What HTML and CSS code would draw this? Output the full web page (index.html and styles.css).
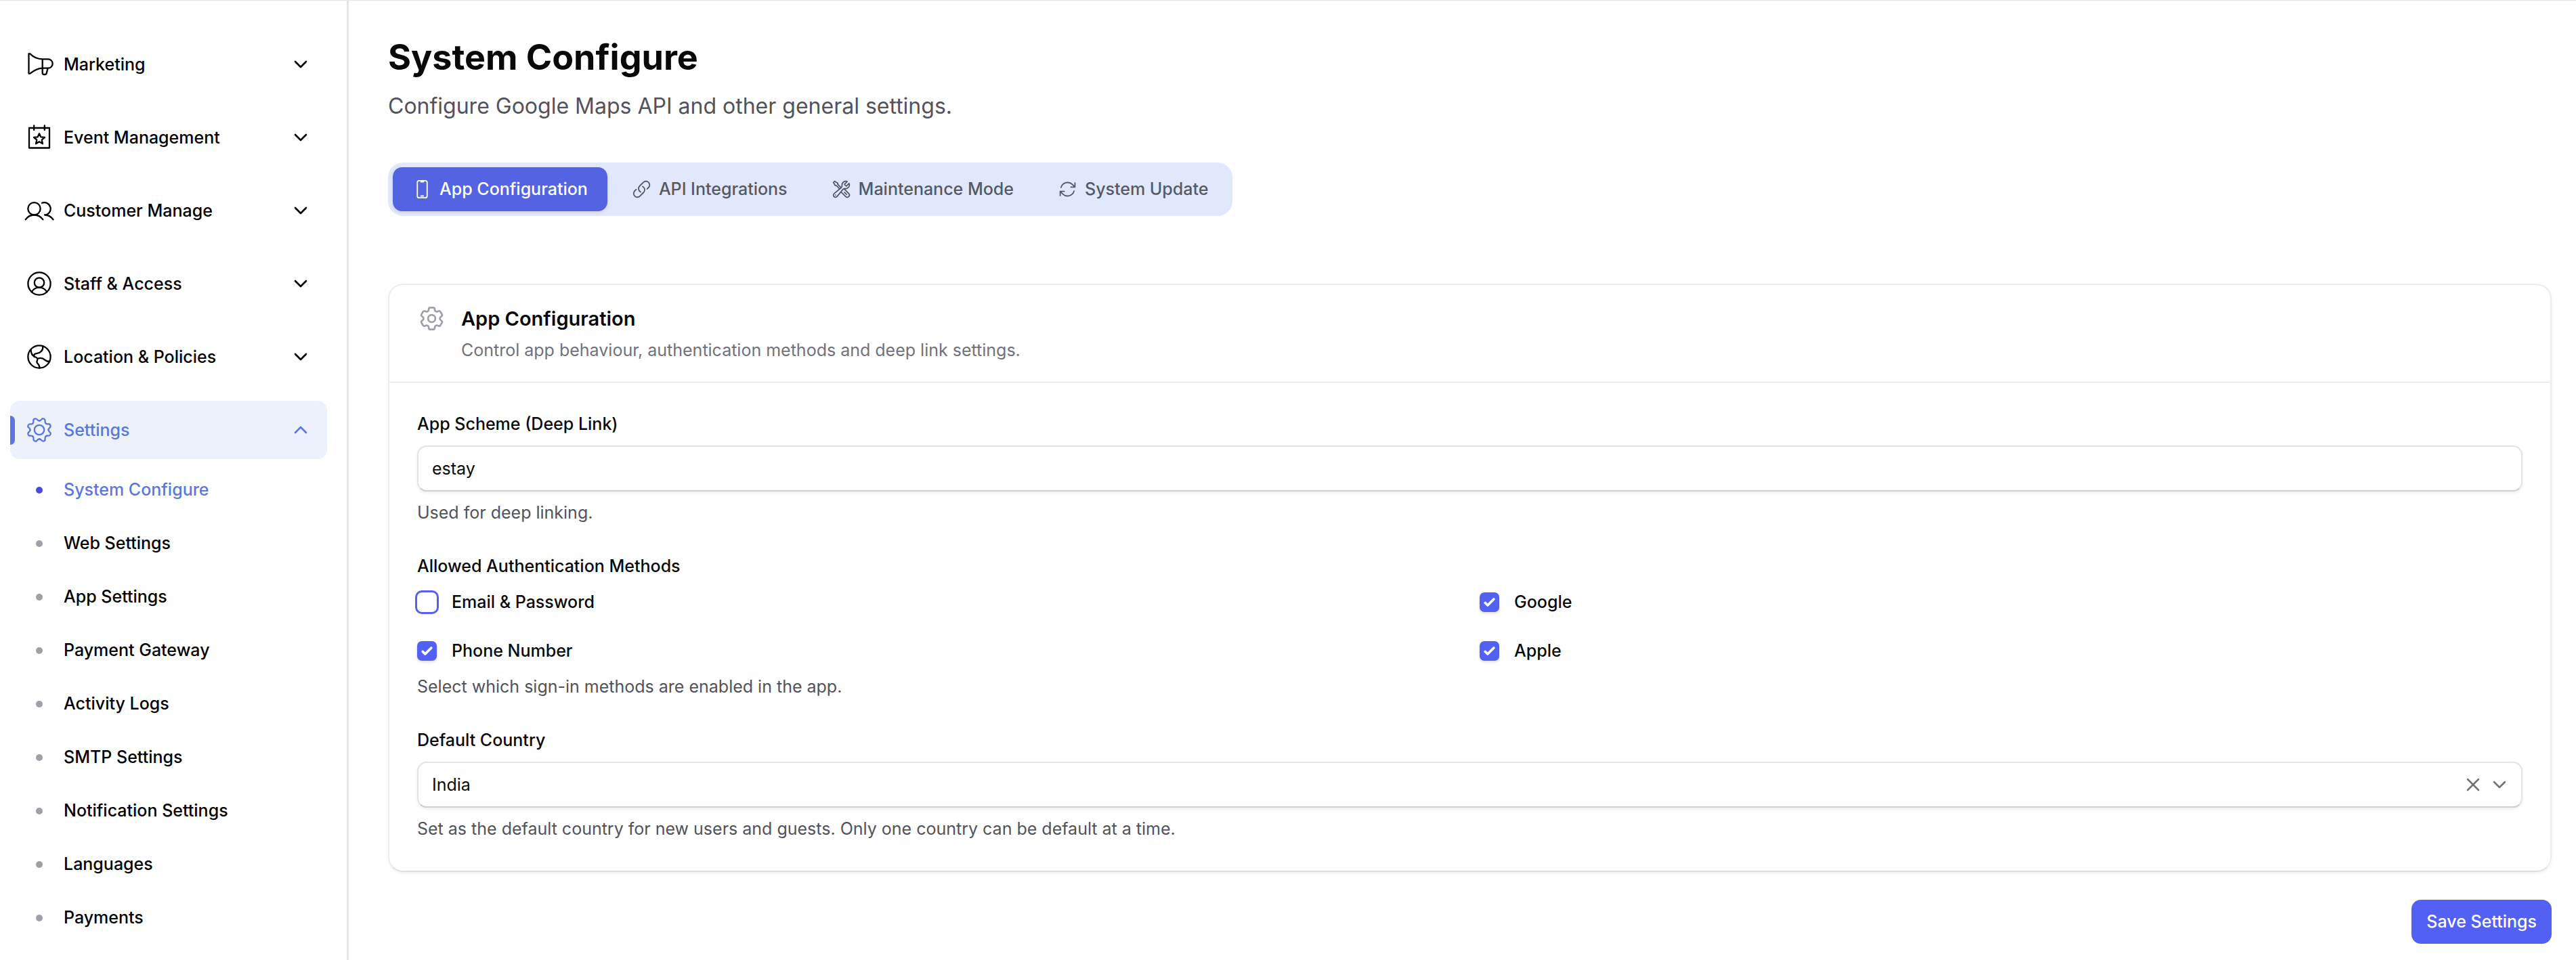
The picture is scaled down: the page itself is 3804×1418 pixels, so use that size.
FILE: index.html
```html
<!DOCTYPE html>
<html lang="en">
<head>
    <meta charset="UTF-8">
    <meta name="viewport" content="width=device-width, initial-scale=1.0">
    <title>System Configure</title>
    <link rel="stylesheet" href="styles.css">
</head>
<body>
    <div class="layout">
        <aside class="sidebar">
            <nav class="nav">
                <button type="button" class="nav-item">
                    <svg class="nav-icon" viewBox="0 0 44 44"><path d="M6.5 6.3h1.8C12.5 10.8 18.5 14.3 26.7 14.3v13.4c-7.7 0-14.2 4.8-18.4 8H6.5zM26.7 14.3H35a6.7 6.7 0 0 1 0 13.4h-8.3v7q0 2.3 2.3 2.3h1.4q2 0 2.4-2l1.8-7.3"/></svg>
                    <span>Marketing</span>
                    <svg class="chevron" viewBox="0 0 24 24"><path d="m4 8 8 8 8-8"/></svg>
                </button>
                <button type="button" class="nav-item">
                    <svg class="nav-icon" viewBox="0 0 44 44"><path d="M7 8h30v29.5H7zM14.2 4.5v6.5M29.8 4.5v6.5M22 16.2l2.3 5.2 5.7.5-4.3 3.8 1.3 5.6-5-3-5 3 1.3-5.6-4.3-3.8 5.7-.5z"/></svg>
                    <span>Event Management</span>
                    <svg class="chevron" viewBox="0 0 24 24"><path d="m4 8 8 8 8-8"/></svg>
                </button>
                <button type="button" class="nav-item">
                    <svg class="nav-icon" viewBox="0 0 44 44"><circle cx="14.5" cy="19.3" r="9.2"/><path d="M1.9 35.2Q6.5 28.5 14.5 28.5T27.3 35.2M26 10.8a9.2 9.2 0 1 1 4 17.7M30 28.5q7.5 0 12.5 6.7"/></svg>
                    <span>Customer Manage</span>
                    <svg class="chevron" viewBox="0 0 24 24"><path d="m4 8 8 8 8-8"/></svg>
                </button>
                <button type="button" class="nav-item">
                    <svg class="nav-icon" viewBox="0 0 44 44"><circle cx="22" cy="22" r="16.6"/><circle cx="22" cy="20.5" r="7.2"/><path d="M10.8 34.2q4-6.5 11.2-6.5t11.2 6.5"/></svg>
                    <span>Staff &amp; Access</span>
                    <svg class="chevron" viewBox="0 0 24 24"><path d="m4 8 8 8 8-8"/></svg>
                </button>
                <button type="button" class="nav-item">
                    <svg class="nav-icon" viewBox="0 0 44 44"><circle cx="22" cy="22" r="16.6"/><path d="M27.2 6.5c.6 5.5-3 9.8-8.2 10.3-3.8.4-5.8 1.7-4.2 5.4M9.6 11.5c.2 4.5 1.4 8.5 5.2 10.2 2.4 1 4.2 1.7 4.6 3.3.6 2.6-2.8 3.5 0 6.7 2.2 2.3 3.4 3.5 3.1 6.8M19.8 24.5q6.5-1.8 10.2 2 3 2.5 7.2 2.5"/></svg>
                    <span>Location &amp; Policies</span>
                    <svg class="chevron" viewBox="0 0 24 24"><path d="m4 8 8 8 8-8"/></svg>
                </button>
                <button type="button" class="nav-item active" aria-expanded="true">
                    <svg class="nav-icon" viewBox="0 0 44 44">
                        <defs><path id="tooth" d="M22 8.5Q24 8.3 25.2 6.6 26.4 4.7 28.6 5.5 30.8 6.4 30.6 8.85 30.2 11.2 31.55 12.45"/></defs>
                        <circle cx="22" cy="22" r="7.2"/>
                        <use href="#tooth"/>
                        <use href="#tooth" transform="rotate(45 22 22)"/>
                        <use href="#tooth" transform="rotate(90 22 22)"/>
                        <use href="#tooth" transform="rotate(135 22 22)"/>
                        <use href="#tooth" transform="rotate(180 22 22)"/>
                        <use href="#tooth" transform="rotate(225 22 22)"/>
                        <use href="#tooth" transform="rotate(270 22 22)"/>
                        <use href="#tooth" transform="rotate(315 22 22)"/>
                    </svg>
                    <span>Settings</span>
                    <svg class="chevron" viewBox="0 0 24 24"><path d="m4 16 8-8 8 8"/></svg>
                </button>
            </nav>
            <nav class="subnav" aria-label="Settings">
                <a href="#" class="current">System Configure</a>
                <a href="#">Web Settings</a>
                <a href="#">App Settings</a>
                <a href="#">Payment Gateway</a>
                <a href="#">Activity Logs</a>
                <a href="#">SMTP Settings</a>
                <a href="#">Notification Settings</a>
                <a href="#">Languages</a>
                <a href="#">Payments</a>
            </nav>
        </aside>

        <main class="content">
            <h1>System Configure</h1>
            <p class="subtitle">Configure Google Maps API and other general settings.</p>

            <div class="tabs" role="tablist">
                <button type="button" class="tab active" role="tab" aria-selected="true">
                    <svg viewBox="0 0 24 24"><path d="M10.5 1.5H8.25A2.25 2.25 0 0 0 6 3.75v16.5a2.25 2.25 0 0 0 2.25 2.25h7.5A2.25 2.25 0 0 0 18 20.25V3.75a2.25 2.25 0 0 0-2.25-2.25H13.5m-3 0V3h3V1.5m-3 0h3m-3 18.75h3"/></svg>
                    App Configuration
                </button>
                <button type="button" class="tab" role="tab">
                    <svg viewBox="0 0 24 24"><path d="M13.19 8.688a4.5 4.5 0 0 1 1.242 7.244l-4.5 4.5a4.5 4.5 0 0 1-6.364-6.364l1.757-1.757m13.35-.622 1.757-1.757a4.5 4.5 0 0 0-6.364-6.364l-4.5 4.5a4.5 4.5 0 0 0 1.242 7.244"/></svg>
                    API Integrations
                </button>
                <button type="button" class="tab" role="tab">
                    <svg viewBox="0 0 24 24"><path d="M11.42 15.17 17.25 21A2.652 2.652 0 0 0 21 17.25l-5.877-5.877M11.42 15.17l2.496-3.03c.317-.384.74-.626 1.208-.766M11.42 15.17l-4.655 5.653a2.548 2.548 0 1 1-3.586-3.586l6.837-5.63m5.108-.233c.55-.164 1.163-.188 1.743-.14a4.5 4.5 0 0 0 4.486-6.336l-3.276 3.277a3.004 3.004 0 0 1-2.25-2.25l3.276-3.276a4.5 4.5 0 0 0-6.336 4.486c.091 1.076-.071 2.264-.904 2.95l-.102.085m-1.745 1.437L5.909 7.5H4.5L2.25 3.75l1.5-1.5L7.5 4.5v1.409l4.26 4.26m-1.745 1.437 1.745-1.437m6.615 8.206L15.75 15.75M4.867 19.125h.008v.008h-.008v-.008Z"/></svg>
                    Maintenance Mode
                </button>
                <button type="button" class="tab" role="tab">
                    <svg viewBox="0 0 24 24"><path d="M16.023 9.348h4.992v-.001M2.985 19.644v-4.992m0 0h4.992m-4.993 0 3.181 3.183a8.25 8.25 0 0 0 13.803-3.7M4.031 9.865a8.25 8.25 0 0 1 13.803-3.7l3.181 3.182m0-4.991v4.99"/></svg>
                    System Update
                </button>
            </div>

            <form>
                <section class="card">
                    <header class="card-header">
                        <svg viewBox="0 0 24 24"><path d="M9.594 3.94c.09-.542.56-.94 1.11-.94h2.593c.55 0 1.02.398 1.11.94l.213 1.281c.063.374.313.686.645.87.074.04.147.083.22.127.325.196.72.257 1.075.124l1.217-.456a1.125 1.125 0 0 1 1.37.49l1.296 2.247a1.125 1.125 0 0 1-.26 1.431l-1.003.827c-.293.241-.438.613-.43.992a7.723 7.723 0 0 1 0 .255c-.008.378.137.75.43.991l1.004.827c.424.35.534.955.26 1.43l-1.298 2.247a1.125 1.125 0 0 1-1.369.491l-1.217-.456c-.355-.133-.75-.072-1.076.124a6.47 6.47 0 0 1-.22.128c-.331.183-.581.495-.644.869l-.213 1.281c-.09.543-.56.94-1.11.94h-2.594c-.55 0-1.019-.398-1.11-.94l-.213-1.281c-.062-.374-.312-.686-.644-.87a6.52 6.52 0 0 1-.22-.127c-.325-.196-.72-.257-1.076-.124l-1.217.456a1.125 1.125 0 0 1-1.369-.49l-1.297-2.247a1.125 1.125 0 0 1 .26-1.431l1.004-.827c.292-.24.437-.613.43-.991a6.932 6.932 0 0 1 0-.255c.007-.38-.138-.751-.43-.992l-1.004-.827a1.125 1.125 0 0 1-.26-1.43l1.297-2.247a1.125 1.125 0 0 1 1.37-.491l1.216.456c.356.133.751.072 1.076-.124.072-.044.146-.086.22-.128.332-.183.582-.495.644-.869l.214-1.28Z"/><circle cx="12" cy="12" r="3"/></svg>
                        <div>
                            <h2>App Configuration</h2>
                            <p>Control app behaviour, authentication methods and deep link settings.</p>
                        </div>
                    </header>

                    <div class="card-body">
                        <div class="field">
                            <label for="scheme">App Scheme (Deep Link)</label>
                            <input type="text" id="scheme" class="control" value="estay">
                            <p class="hint">Used for deep linking.</p>
                        </div>

                        <div class="field" role="group" aria-labelledby="authLabel">
                            <span class="field-title" id="authLabel">Allowed Authentication Methods</span>
                            <div class="checks">
                                <label><input type="checkbox" class="focused"> Email &amp; Password</label>
                                <label><input type="checkbox" checked> Google</label>
                                <label><input type="checkbox" checked> Phone Number</label>
                                <label><input type="checkbox" checked> Apple</label>
                            </div>
                            <p class="hint">Select which sign-in methods are enabled in the app.</p>
                        </div>

                        <div class="field">
                            <label for="country">Default Country</label>
                            <div class="select-wrap">
                                <select id="country" class="control">
                                    <option>India</option>
                                </select>
                                <div class="select-actions">
                                    <button type="button" aria-label="Clear"><svg viewBox="0 0 24 24"><path d="m4 4 16 16M20 4 4 20"/></svg></button>
                                    <svg viewBox="0 0 24 24"><path d="m4 8 8 8 8-8"/></svg>
                                </div>
                            </div>
                            <p class="hint">Set as the default country for new users and guests. Only one country can be default at a time.</p>
                        </div>
                    </div>
                </section>

                <div class="form-actions">
                    <button type="submit" class="btn">Save Settings</button>
                </div>
            </form>
        </main>
    </div>
</body>
</html>
```

FILE: styles.css
```css
* {
    margin: 0;
    padding: 0;
    box-sizing: border-box;
}

:root {
    --primary-color: #5260f3;
    --nav-color: #5b76e1;
    --text-color: #09090b;
    --muted-color: #52525c;
    --border-color: #e5e5e6;
}

body {
    font-family: 'Inter', sans-serif;
    font-size: 25px;
    line-height: 43px;
    color: var(--text-color);
    background-color: #fff;
}

button,
input,
select {
    font: inherit;
    color: inherit;
    border: none;
    background: none;
}

button {
    cursor: pointer;
}

svg {
    flex-shrink: 0;
    fill: none;
    stroke: currentColor;
    stroke-width: 2;
    stroke-linecap: round;
    stroke-linejoin: round;
}

.layout {
    display: flex;
    min-height: 100vh;
    border-top: 1px solid var(--border-color);
}

/* Sidebar */
.sidebar {
    flex: 0 0 515px;
    padding: 51px 29px 0 15px;
    border-right: 3px solid var(--border-color);
    color: #000;
    font-weight: 500;
}

.nav {
    display: flex;
    flex-direction: column;
    gap: 22px;
}

.nav-item {
    position: relative;
    display: flex;
    align-items: center;
    gap: 14px;
    height: 86px;
    padding: 0 27px 0 21px;
    border-radius: 14px;
    font-weight: 500;
    text-align: left;
    overflow: hidden;
}

.nav-item span {
    flex: 1;
}

.nav-icon {
    width: 44px;
    height: 44px;
    stroke-width: 2.3;
}

.chevron {
    width: 24px;
    height: 24px;
    stroke-width: 2.6;
}

.nav-item.active {
    color: var(--nav-color);
    background-color: #ecf1fc;
}

.nav-item.active::before {
    content: '';
    position: absolute;
    left: 0;
    width: 7px;
    height: 43px;
    border-radius: 0 7px 7px 0;
    background-color: var(--nav-color);
}

.subnav {
    display: flex;
    flex-direction: column;
    padding-top: 6px;
}

.subnav a {
    display: flex;
    align-items: center;
    gap: 31px;
    height: 79px;
    padding-left: 38px;
    color: inherit;
    text-decoration: none;
}

.subnav a::before {
    content: '';
    width: 10px;
    height: 10px;
    border-radius: 50%;
    background-color: #9f9fa9;
}

.subnav a.current {
    color: var(--nav-color);
}

.subnav a.current::before {
    background-color: #4b4ae0;
}

/* Content */
.content {
    flex: 1;
    min-width: 0;
    padding: 48px 36px 24px 58px;
}

h1 {
    font-size: 52px;
    line-height: 72px;
    font-weight: 700;
}

.subtitle {
    margin-top: 11px;
    font-size: 32px;
    line-height: 50px;
    color: var(--muted-color);
}

.tabs {
    display: inline-flex;
    gap: 7px;
    margin-top: 58px;
    padding: 7px;
    border-radius: 22px;
    background-color: #e2e8fc;
    vertical-align: top;
}

.tab {
    display: flex;
    align-items: center;
    gap: 11px;
    height: 65px;
    padding: 0 29px;
    border-radius: 14px;
    font-weight: 500;
    color: #535a66;
}

.tab svg {
    width: 29px;
    height: 29px;
    stroke-width: 1.5;
}

.tab.active {
    color: #fff;
    background-color: #5463e1;
    box-shadow: 0 2px 4px rgba(0, 0, 0, 0.1);
}

.card {
    margin-top: 100px;
    border: 2px solid #ececed;
    border-bottom-color: #dedede;
    border-radius: 22px;
    box-shadow: 0 2px 4px rgba(0, 0, 0, 0.06);
}

.card-header {
    display: flex;
    gap: 22px;
    padding: 28px 41px 25px;
    border-bottom: 1px solid #e0e0e1;
}

.card-header svg {
    width: 43px;
    height: 43px;
    stroke-width: 1.5;
    color: #9f9fa9;
}

.card-header h2 {
    font-size: 29px;
    line-height: 43px;
    font-weight: 600;
}

.card-header p {
    margin-top: 4px;
    color: #71717b;
}

.card-body {
    display: flex;
    flex-direction: column;
    gap: 36px;
    padding: 40px 41px;
}

.field {
    display: flex;
    flex-direction: column;
    gap: 10px;
}

.field label,
.field-title {
    font-weight: 500;
}

.control {
    width: 100%;
    height: 68px;
    padding: 0 20px;
    border: 2px solid #e3e3e4;
    border-bottom-color: #cfcfd0;
    border-radius: 14px;
    background-color: #fff;
    box-shadow: 0 2px 4px rgba(0, 0, 0, 0.07);
    appearance: none;
    outline: none;
}

.hint {
    color: var(--muted-color);
}

.checks {
    display: grid;
    grid-template-columns: 1fr 1fr;
    gap: 29px;
}

.checks label {
    display: flex;
    align-items: center;
    gap: 22px;
}

.checks input {
    width: 29px;
    height: 29px;
    border-radius: 7px;
    appearance: none;
    box-shadow: 0 2px 4px rgba(0, 0, 0, 0.15);
}

.checks input:checked {
    background: var(--primary-color) url("data:image/svg+xml,%3Csvg xmlns='http://www.w3.org/2000/svg' viewBox='0 0 16 16' fill='white'%3E%3Cpath d='M12.207 4.793a1 1 0 0 1 0 1.414l-5 5a1 1 0 0 1-1.414 0l-2-2a1 1 0 0 1 1.414-1.414L6.5 9.086l4.293-4.293a1 1 0 0 1 1.414 0z'/%3E%3C/svg%3E") center / 100% no-repeat;
}

.checks input.focused {
    box-shadow: 0 0 0 3px var(--primary-color);
}

.select-wrap {
    position: relative;
    display: flex;
}

/* Clear button and arrow lie over the select */
.select-actions {
    position: absolute;
    top: 0;
    right: 22px;
    height: 100%;
    display: flex;
    align-items: center;
    gap: 15px;
    color: #71717b;
    pointer-events: none;
}

.select-actions button {
    display: flex;
    pointer-events: auto;
}

.select-actions svg {
    width: 24px;
    height: 24px;
    stroke-width: 2.5;
}

.form-actions {
    display: flex;
    justify-content: flex-end;
    margin-top: 41px;
}

.btn {
    height: 65px;
    padding: 0 22px;
    border-radius: 14px;
    font-weight: 500;
    color: #fff;
    background-color: var(--primary-color);
}
```
